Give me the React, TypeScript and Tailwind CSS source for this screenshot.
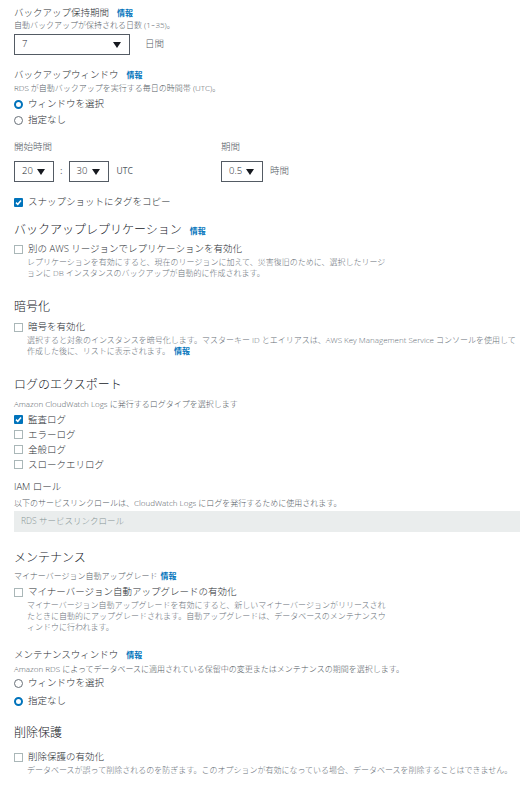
import type { ReactNode } from "react";

const FONT = "[font-family:'Open_Sans','Noto_Sans_CJK_JP',sans-serif]";

function Info() {
  return <span className="ml-[8px] text-[8px] font-bold text-[#0073bb]">情報</span>;
}

function Label({ children, className = "" }: { children: ReactNode; className?: string }) {
  return <div className={`text-[9.5px] leading-[12px] font-light text-[#2a2e33] ${className}`}>{children}</div>;
}

function Sub({ children, className = "" }: { children: ReactNode; className?: string }) {
  return <div className={`text-[8px] leading-[12px] font-light text-[#545b64] ${className}`}>{children}</div>;
}

function Heading({ children, className = "" }: { children: ReactNode; className?: string }) {
  return <div className={`text-[12px] leading-[18px] font-light text-[#16191f] ${className}`}>{children}</div>;
}

function Desc({ children, className = "" }: { children: ReactNode; className?: string }) {
  return <div className={`pl-[13px] text-[8px] leading-[11px] font-light text-[#687078] ${className}`}>{children}</div>;
}

function Check({ checked = false, children, className = "" }: { checked?: boolean; children: ReactNode; className?: string }) {
  return (
    <div className={`flex items-center gap-[5px] text-[9.5px] leading-[14px] font-light text-[#2a2e33] ${className}`}>
      {checked ? (
        <span className="flex h-[9px] w-[9px] items-center justify-center rounded-[1px] bg-[#0073bb]">
          <svg width="7" height="7" viewBox="0 0 7 7">
            <path d="M1 3.6 L2.8 5.3 L6 1.5" fill="none" stroke="#fff" strokeWidth="1.5" />
          </svg>
        </span>
      ) : (
        <span className="h-[9px] w-[9px] border border-[#aab7b8] bg-white" />
      )}
      <span>{children}</span>
    </div>
  );
}

function Radio({ checked = false, children, className = "" }: { checked?: boolean; children: ReactNode; className?: string }) {
  return (
    <div className={`flex h-[16px] items-center gap-[5px] text-[9.5px] font-light text-[#2a2e33] ${className}`}>
      {checked ? (
        <span className="h-[9px] w-[9px] rounded-full border-[2.5px] border-[#0073bb] bg-white" />
      ) : (
        <span className="h-[9px] w-[9px] rounded-full border border-[#687078] bg-white" />
      )}
      <span>{children}</span>
    </div>
  );
}

function Caret() {
  return (
    <svg width="8" height="6" viewBox="0 0 8 6">
      <path d="M0 0 H8 L4 6 Z" fill="#16191f" />
    </svg>
  );
}

function Select({ value, className = "" }: { value: string; className?: string }) {
  return (
    <div
      className={`flex h-[21px] items-center justify-between border border-[#545b64] bg-white pl-[7px] pr-[8px] text-[9.5px] font-light text-[#16191f] ${className}`}
    >
      <span>{value}</span>
      <Caret />
    </div>
  );
}

export default function App() {
  return (
    <div className={`min-h-[785px] w-[525px] bg-white pl-[14px] pr-[4px] pt-[7px] ${FONT}`}>
      {/* バックアップ保持期間 */}
      <Label>
        バックアップ保持期間<Info />
      </Label>
      <Sub>自動バックアップが保持される日数 (1~35)。</Sub>
      <div className="mt-[3px] flex items-center">
        <Select value="7" className="w-[116px]" />
        <span className="ml-[15px] text-[9.5px] font-light text-[#545b64]">日間</span>
      </div>

      {/* バックアップウィンドウ */}
      <Label className="mt-[14px]">
        バックアップウィンドウ<Info />
      </Label>
      <Sub className="mt-[1px]">RDS が自動バックアップを実行する毎日の時間帯 (UTC)。</Sub>
      <Radio checked className="mt-[2px]">ウィンドウを選択</Radio>
      <Radio>指定なし</Radio>

      <div className="mt-[13px] flex">
        <div className="w-[207px]">
          <Label className="text-[#545b64]">開始時間</Label>
          <div className="mt-[8px] flex items-center">
            <Select value="20" className="w-[40px]" />
            <span className="mx-[6px] text-[9.5px] text-[#545b64]">:</span>
            <Select value="30" className="w-[40px]" />
            <span className="ml-[8px] text-[8.5px] text-[#545b64]">UTC</span>
          </div>
        </div>
        <div>
          <Label className="text-[#545b64]">期間</Label>
          <div className="mt-[8px] flex items-center">
            <Select value="0.5" className="w-[42px]" />
            <span className="ml-[7px] text-[9.5px] font-light text-[#545b64]">時間</span>
          </div>
        </div>
      </div>

      <Check checked className="mt-[13px]">スナップショットにタグをコピー</Check>

      {/* バックアップレプリケーション */}
      <Heading className="mt-[12px]">
        バックアップレプリケーション<Info />
      </Heading>
      <Check className="mt-[2px]">別の AWS リージョンでレプリケーションを有効化</Check>
      <Desc className="w-[372px]">
        レプリケーションを有効にすると、現在のリージョンに加えて、災害復旧のために、選択したリージョンに DB インスタンスのバックアップが自動的に作成されます。
      </Desc>

      {/* 暗号化 */}
      <Heading className="mt-[20px]">暗号化</Heading>
      <Check className="mt-[4px]">暗号を有効化</Check>
      <Desc>
        選択すると対象のインスタンスを暗号化します。マスターキー ID とエイリアスは、AWS Key Management Service コンソールを使用して作成した後に、リストに表示されます。
        <span className="ml-[4px] font-bold text-[#0073bb]">情報</span>
      </Desc>

      {/* ログのエクスポート */}
      <Heading className="mt-[20px]">ログのエクスポート</Heading>
      <Sub className="mt-[4px]">Amazon CloudWatch Logs に発行するログタイプを選択します</Sub>
      <div className="mt-[2px]">
        <Check checked className="leading-[15px]">監査ログ</Check>
        <Check className="leading-[15px]">エラーログ</Check>
        <Check className="leading-[15px]">全般ログ</Check>
        <Check className="leading-[15px]">スロークエリログ</Check>
      </div>

      <Label className="mt-[9px]">IAM ロール</Label>
      <Sub className="mt-[4px]">以下のサービスリンクロールは、CloudWatch Logs にログを発行するために使用されます。</Sub>
      <div className="mt-[2px] flex h-[21px] w-[506px] items-center bg-[#eaeded] pl-[7px] text-[8.5px] font-light text-[#879596]">
        RDS サービスリンクロール
      </div>

      {/* メンテナンス */}
      <Heading className="mt-[17px]">メンテナンス</Heading>
      <Sub className="mt-[3px]">
        マイナーバージョン自動アップグレード<span className="ml-[3px] font-bold text-[#0073bb]">情報</span>
      </Sub>
      <Check className="mt-[3px]">マイナーバージョン自動アップグレードの有効化</Check>
      <Desc className="w-[378px]">
        マイナーバージョン自動アップグレードを有効にすると、新しいマイナーバージョンがリリースされたときに自動的にアップグレードされます。自動アップグレードは、データベースのメンテナンスウィンドウに行われます。
      </Desc>

      <Label className="mt-[17px]">
        メンテナンスウィンドウ<Info />
      </Label>
      <Sub className="mt-[2px]">Amazon RDS によってデータベースに適用されている保留中の変更またはメンテナンスの期間を選択します。</Sub>
      <Radio>ウィンドウを選択</Radio>
      <Radio checked className="mt-[2px]">指定なし</Radio>

      {/* 削除保護 */}
      <Heading className="mt-[15px]">削除保護</Heading>
      <Check className="mt-[8px]">削除保護の有効化</Check>
      <Desc>データベースが誤って削除されるのを防ぎます。このオプションが有効になっている場合、データベースを削除することはできません。</Desc>
    </div>
  );
}
